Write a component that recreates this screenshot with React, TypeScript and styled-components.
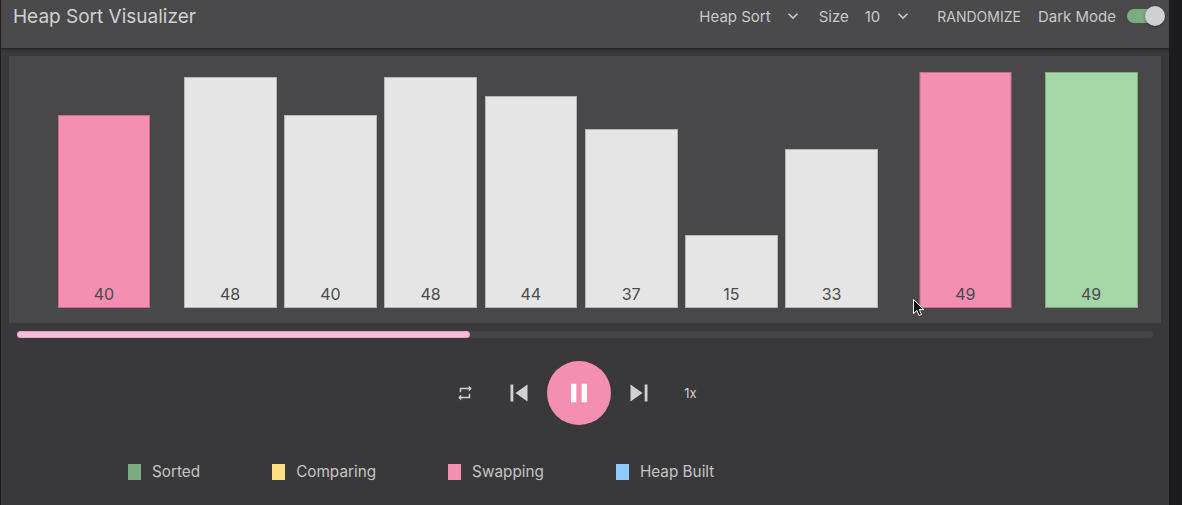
import React from 'react';
import styled, { createGlobalStyle } from 'styled-components';

const GlobalStyle = createGlobalStyle`
  html, body {
    margin: 0;
    padding: 0;
    background: #1c1c1e;
    overflow: hidden;
  }
`;

const Shell = styled.div`
  position: relative;
  box-sizing: border-box;
  width: 1168px;
  height: 505px;
  margin-left: 1px;
  overflow: hidden;
  background: #39393b;
  font-family: 'Inter', 'Liberation Sans', sans-serif;
  color: #c8c8ca;
`;

const AppBar = styled.header`
  display: flex;
  align-items: center;
  box-sizing: border-box;
  height: 48px;
  padding: 0 8px 16px 12px;
  background: #4a4a4c;
  box-shadow: 0 1px 3px rgba(0, 0, 0, 0.55);
`;

const Title = styled.h1`
  flex: 1;
  margin: 0;
  font-size: 19px;
  font-weight: 400;
  color: #d0d0d2;
`;

const Picker = styled.div`
  display: flex;
  align-items: center;
  font-size: 15px;
  margin-right: ${p => p.$gap}px;
`;

const PickerLabel = styled.span`
  margin-right: 16px;
`;

const PickerValue = styled.span`
  margin-right: ${p => p.$gap}px;
`;

const Chevron = styled.svg`
  width: 20px;
  height: 20px;
  fill: #c8c8ca;
`;

const TextButton = styled.button`
  margin-right: 17px;
  padding: 0;
  border: 0;
  background: none;
  color: #c8c8ca;
  font: 400 14px 'Inter', 'Liberation Sans', sans-serif;
`;

const SwitchLabel = styled.span`
  margin-right: 11px;
  font-size: 15px;
`;

const SwitchTrack = styled.div`
  position: relative;
  width: 34px;
  height: 14px;
  border-radius: 7px;
  background: #7dab80;
`;

const SwitchThumb = styled.div`
  position: absolute;
  top: -3px;
  right: -4px;
  width: 20px;
  height: 20px;
  border-radius: 50%;
  background: #d0d0d4;
  box-shadow: 0 1px 3px rgba(0, 0, 0, 0.4);
`;

const Stage = styled.section`
  display: flex;
  justify-content: center;
  align-items: flex-end;
  gap: 7.5px;
  box-sizing: border-box;
  height: 267px;
  margin: 8px 8px 0;
  padding: 0 8px 15px 0;
  background: #48484a;
`;

const Bar = styled.div`
  display: flex;
  align-items: flex-end;
  justify-content: center;
  box-sizing: border-box;
  width: 92.75px;
  padding-bottom: 3px;
  border: 1px solid rgba(0, 0, 0, 0.2);
  background: ${p => p.$color};
  color: #4a4a4c;
  font-size: 16px;
  line-height: 20px;
  transform: translateX(${p => p.$shift}px);
`;

const Progress = styled.div`
  height: 7px;
  margin: 8px 16px 0;
  border-radius: 4px;
  background: #444446;
`;

const ProgressFill = styled.div`
  box-sizing: border-box;
  height: 100%;
  border-radius: 4px;
  border: 1px solid rgba(0, 0, 0, 0.1);
  background: #f8bbd9;
`;

const Controls = styled.div`
  display: flex;
  justify-content: center;
  align-items: center;
  gap: 11px;
  height: 64px;
  margin-top: 23px;
  padding-right: 15px;
`;

const IconButton = styled.button`
  display: flex;
  align-items: center;
  justify-content: center;
  width: 34px;
  height: 34px;
  padding: 0;
  border: 0;
  background: none;
  color: #d0d0d4;
  font: 400 13px 'Inter', 'Liberation Sans', sans-serif;
  margin: ${p => p.$margin || '0'};

  svg {
    fill: currentColor;
  }
`;

const PlayButton = styled.button`
  display: flex;
  align-items: center;
  justify-content: center;
  width: 64px;
  height: 64px;
  padding: 0;
  border: 0;
  border-radius: 50%;
  background: #f48fb1;
  color: #fff;

  svg {
    fill: currentColor;
  }
`;

const Legend = styled.div`
  display: flex;
  gap: 72px;
  margin-top: 38px;
  padding-left: 127px;
`;

const LegendItem = styled.div`
  display: flex;
  align-items: center;
  gap: 11px;
  font-size: 15.3px;
  line-height: 18px;
  color: #c4c4c6;
`;

const Swatch = styled.span`
  width: 13px;
  height: 16px;
  background: ${p => p.$color};
`;

const Cursor = styled.svg`
  position: absolute;
  left: 911px;
  top: 298px;
  width: 14px;
  height: 20px;
`;

const PINK = '#f48fb1';
const GREY = '#e5e5e5';
const GREEN = '#a5d6a7';

const bars = [
  { value: 40, color: PINK, shift: -26 },
  { value: 48, color: GREY, shift: 0 },
  { value: 40, color: GREY, shift: 0 },
  { value: 48, color: GREY, shift: 0 },
  { value: 44, color: GREY, shift: 0 },
  { value: 37, color: GREY, shift: 0 },
  { value: 15, color: GREY, shift: 0 },
  { value: 33, color: GREY, shift: 0 },
  { value: 49, color: PINK, shift: 33.5 },
  { value: 49, color: GREEN, shift: 59 },
];

const legend = [
  { label: 'Sorted', color: '#7dab80' },
  { label: 'Comparing', color: '#ffe082' },
  { label: 'Swapping', color: PINK },
  { label: 'Heap Built', color: '#90caf9' },
];

const ExpandMore = () => (
  <Chevron viewBox="0 0 24 24">
    <path d="M16.59 8.59L12 13.17 7.41 8.59 6 10l6 6 6-6z" />
  </Chevron>
);

export default function App() {
  return (
    <>
      <GlobalStyle />
      <Shell>
        <AppBar>
          <Title>Heap Sort Visualizer</Title>
          <Picker $gap={16}>
            <PickerValue $gap={12}>Heap Sort</PickerValue>
            <ExpandMore />
          </Picker>
          <Picker $gap={24}>
            <PickerLabel>Size</PickerLabel>
            <PickerValue $gap={13}>10</PickerValue>
            <ExpandMore />
          </Picker>
          <TextButton>RANDOMIZE</TextButton>
          <SwitchLabel>Dark Mode</SwitchLabel>
          <SwitchTrack>
            <SwitchThumb />
          </SwitchTrack>
        </AppBar>

        <Stage>
          {bars.map((bar, i) => (
            <Bar
              key={i}
              $color={bar.color}
              $shift={bar.shift}
              style={{ height: bar.value * 4.8 + 1 }}
            >
              {bar.value}
            </Bar>
          ))}
        </Stage>

        <Progress>
          <ProgressFill style={{ width: '39.9%' }} />
        </Progress>

        <Controls>
          <IconButton $margin="0 9px 0 0">
            <svg width="18" height="18" viewBox="0 0 24 24">
              <path d="M7 7h10v3l4-4-4-4v3H5v6h2V7zm10 10H7v-3l-4 4 4 4v-3h12v-6h-2v4z" />
            </svg>
          </IconButton>
          <IconButton>
            <svg width="34" height="34" viewBox="0 0 24 24">
              <path d="M6 6h2v12H6zm3.5 6l8.5 6V6z" />
            </svg>
          </IconButton>
          <PlayButton>
            <svg width="32" height="32" viewBox="0 0 24 24">
              <path d="M6 19h4V5H6v14zm8-14v14h4V5h-4z" />
            </svg>
          </PlayButton>
          <IconButton>
            <svg width="34" height="34" viewBox="0 0 24 24">
              <path d="M6 18l8.5-6L6 6v12zM16 6v12h2V6h-2z" />
            </svg>
          </IconButton>
          <IconButton $margin="0 0 0 7px">1x</IconButton>
        </Controls>

        <Legend>
          {legend.map(item => (
            <LegendItem key={item.label}>
              <Swatch $color={item.color} />
              {item.label}
            </LegendItem>
          ))}
        </Legend>

        <Cursor viewBox="0 0 14 20">
          <path
            d="M1.5 1.5v14l3.4-3 2.2 5 2.4-1-2.2-5h4.4z"
            fill="#111"
            stroke="#fff"
            strokeWidth="1"
          />
        </Cursor>
      </Shell>
    </>
  );
}
